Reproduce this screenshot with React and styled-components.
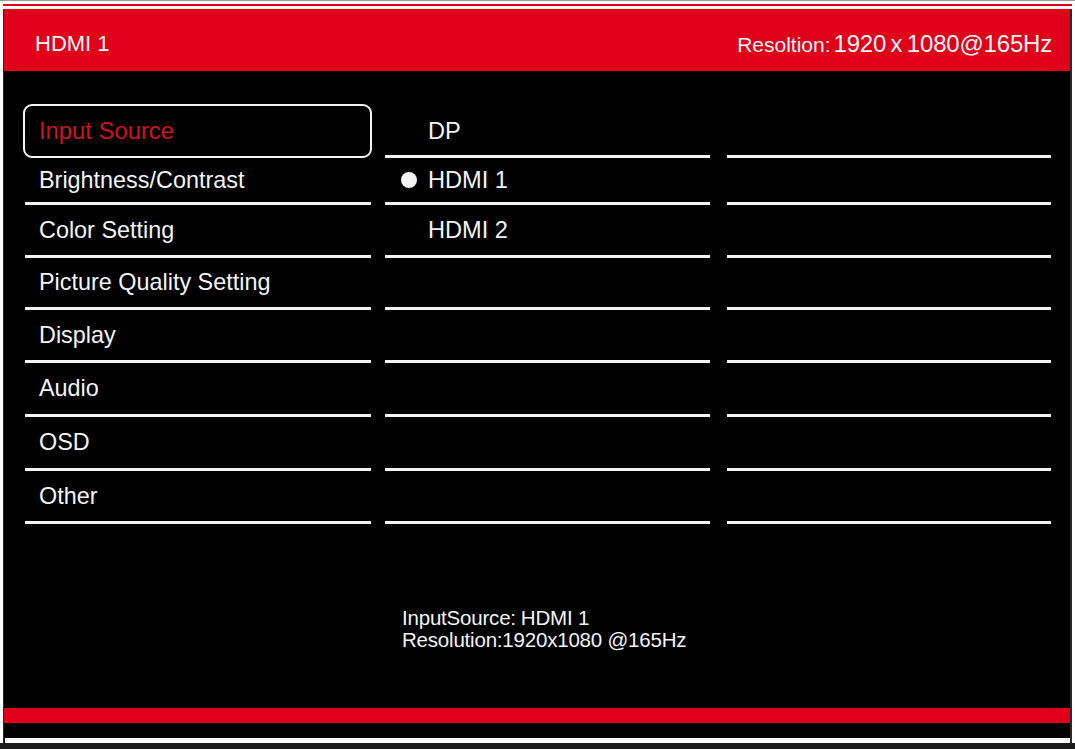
import React from "react";
import styled, { createGlobalStyle } from "styled-components";

const RED = "#e1001a";

const GlobalStyle = createGlobalStyle`
  html, body {
    margin: 0;
    padding: 0;
    background: #ffffff;
  }
  body {
    font-family: "Liberation Sans", Arial, sans-serif;
  }
`;

// Styled Components

const Screen = styled.div`
  width: 1075px;
  height: 749px;
  display: flex;
  flex-direction: column;
  background: #ffffff;
  border-top: 1px solid #9a9a9a;
  box-sizing: border-box;
  overflow: hidden;
`;

const TopRule = styled.div`
  height: 2px;
  margin: 3px 3px 0 3px;
  background: ${RED};
`;

const Panel = styled.div`
  flex: 1;
  margin: 3px 3px 0 3px;
  display: flex;
  flex-direction: column;
  background: #000000;
  border-left: 1px solid #2a2a2a;
  border-right: 2px solid #2a2a2a;
`;

const Header = styled.div`
  height: 62px;
  flex-shrink: 0;
  box-sizing: border-box;
  padding: 8px 18px 0 31px;
  display: flex;
  align-items: center;
  justify-content: space-between;
  background: ${RED};
  color: #f6f6f6;
`;

const SourceName = styled.span`
  font-size: 22px;
`;

const HeaderRes = styled.span`
  display: flex;
  align-items: baseline;
  font-size: 24px;
  word-spacing: -2px;
  letter-spacing: -0.2px;
`;

const ResLabel = styled.span`
  font-size: 21px;
  letter-spacing: 0;
  margin-right: 3px;
`;

const Body = styled.div`
  flex: 1;
  padding: 33px 18px 0 19px;
`;

const Columns = styled.div`
  display: grid;
  grid-template-columns: 349px 325px 328px;
  column-gap: 13px;
`;

const Column = styled.div`
  display: flex;
  flex-direction: column;
  padding-left: ${(p) => (p.$inset ? p.$inset : 0)}px;
`;

const MenuRow = styled.div`
  height: ${(p) => p.h}px;
  box-sizing: border-box;
  display: flex;
  align-items: center;
  padding-left: 14px;
  margin: 0 1px 0 2px;
  border-bottom: 3px solid #f4f4f4;
  font-size: 23.4px;
  color: #f4f4f4;
  white-space: nowrap;
`;

const SelectedRow = styled.div`
  height: ${(p) => p.h}px;
  box-sizing: border-box;
  display: flex;
  align-items: center;
  padding-left: 14px;
  border: 2px solid #f4f4f4;
  border-radius: 9px;
  font-size: 23.8px;
  color: #d4121f;
`;

const OptionRow = styled.div`
  height: ${(p) => p.h}px;
  box-sizing: border-box;
  display: flex;
  align-items: center;
  padding-left: 16px;
  padding-top: ${(p) => (p.$first ? 4 : 0)}px;
  border-bottom: 3px solid #f4f4f4;
  font-size: 23.6px;
  color: #f4f4f4;
`;

const Marker = styled.span`
  width: 16px;
  height: 16px;
  margin-right: 11px;
  border-radius: 50%;
  flex-shrink: 0;
  background: ${(p) => (p.$on ? "#f4f4f4" : "transparent")};
`;

const EmptyRow = styled.div`
  height: ${(p) => p.h}px;
  box-sizing: border-box;
  border-bottom: 3px solid #f4f4f4;
`;

const Info = styled.div`
  grid-column: 2;
  margin-top: 83px;
  padding-left: 17px;
  font-size: 20.5px;
  line-height: 22px;
  color: #f4f4f4;
  letter-spacing: -0.2px;
  white-space: nowrap;
`;

const InfoValue = styled.span`
  margin-left: 5px;
`;

const RedBar = styled.div`
  height: 15px;
  flex-shrink: 0;
  background: ${RED};
`;

const WhiteBar = styled.div`
  height: 5px;
  flex-shrink: 0;
  margin: 15px 0 0 1px;
  background: #ffffff;
`;

const BottomEdge = styled.div`
  height: 6px;
  flex-shrink: 0;
  background: #1c1c1c;
`;

const heights = [54, 47, 53, 52, 53, 54, 54, 53];

const menu = [
  "Input Source",
  "Brightness/Contrast",
  "Color Setting",
  "Picture Quality Setting",
  "Display",
  "Audio",
  "OSD",
  "Other",
];

const options = ["DP", "HDMI 1", "HDMI 2", "", "", "", "", ""];

export default function App() {
  return (
    <>
      <GlobalStyle />
      <Screen>
        <TopRule />
        <Panel>
          <Header>
            <SourceName>HDMI 1</SourceName>
            <HeaderRes>
              <ResLabel>Resoltion:</ResLabel>1920 x 1080@165Hz
            </HeaderRes>
          </Header>
          <Body>
            <Columns>
              <Column>
                {menu.map((m, i) =>
                  i === 0 ? (
                    <SelectedRow key={m} h={heights[i]}>
                      {m}
                    </SelectedRow>
                  ) : (
                    <MenuRow key={m} h={heights[i]}>
                      {m}
                    </MenuRow>
                  )
                )}
              </Column>
              <Column>
                {options.map((o, i) =>
                  o ? (
                    <OptionRow key={i} h={heights[i]} $first={i === 0}>
                      <Marker $on={o === "HDMI 1"} />
                      {o}
                    </OptionRow>
                  ) : (
                    <EmptyRow key={i} h={heights[i]} />
                  )
                )}
              </Column>
              <Column $inset={4}>
                {heights.map((h, i) => (
                  <EmptyRow key={i} h={h} />
                ))}
              </Column>
              <Info>
                <div>
                  InputSource:<InfoValue>HDMI 1</InfoValue>
                </div>
                <div>Resolution:1920x1080 @165Hz</div>
              </Info>
            </Columns>
          </Body>
          <RedBar />
          <WhiteBar />
        </Panel>
        <BottomEdge />
      </Screen>
    </>
  );
}
